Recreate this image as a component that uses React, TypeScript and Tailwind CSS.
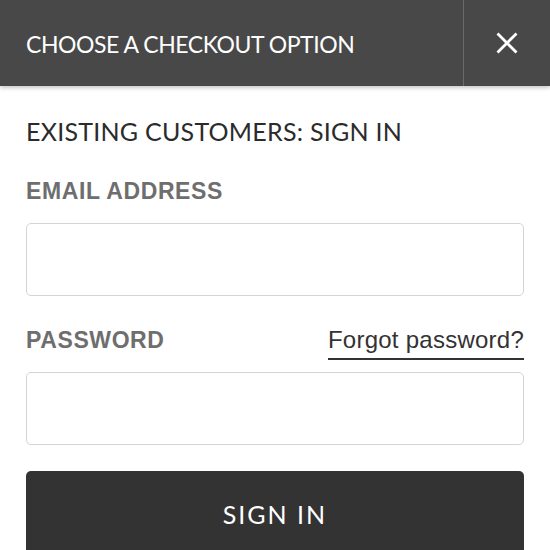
import React from "react";

export default function App() {
  const futura = { fontFamily: '"Lato", "Noto Sans", sans-serif' };
  const helv = { fontFamily: '"Liberation Sans", Arial, sans-serif' };
  return (
    <div className="w-[550px] h-[550px] overflow-hidden bg-white relative">
      <div className="h-[86px] bg-[#484848] flex items-stretch relative shadow-[0_2px_4px_rgba(0,0,0,0.22)] z-10">
        <div className="flex-1 flex items-center pl-[26px] pt-[2px]">
          <span className="text-white text-[23px] tracking-[-0.45px]" style={futura}>
            CHOOSE A CHECKOUT OPTION
          </span>
        </div>
        <div className="w-[1px] bg-[#6b6b6b]" />
        <div className="w-[86px] flex items-center justify-center">
          <svg width="22" height="22" viewBox="0 0 22 22">
            <path d="M1.5 1.5 L20.5 20.5 M20.5 1.5 L1.5 20.5" stroke="white" strokeWidth="2.8" />
          </svg>
        </div>
      </div>
      <div className="px-[26px] pt-[29px]">
        <h1 className="text-[#2b2b2b] text-[25px] leading-[32px] tracking-[0.25px]" style={futura}>
          EXISTING CUSTOMERS: SIGN IN
        </h1>
        <label
          className="block mt-[31px] text-[#6e6e6e] text-[23px] font-bold leading-[26px] tracking-[0.6px]"
          style={helv}
        >
          EMAIL ADDRESS
        </label>
        <div className="mt-[19px] h-[73px] border-[1.5px] border-[#d4d4d4] rounded-[5px]" />
        <div className="mt-[31px] flex items-start justify-between">
          <span
            className="text-[#6e6e6e] text-[23px] font-bold leading-[26px] tracking-[0.6px]"
            style={helv}
          >
            PASSWORD
          </span>
          <span
            className="block text-[#333333] text-[24px] leading-[26px] tracking-[0.25px] border-b-2 border-[#333333] pb-[5px]"
            style={helv}
          >
            Forgot password?
          </span>
        </div>
        <div className="mt-[12px] h-[73px] border-[1.5px] border-[#d4d4d4] rounded-[5px]" />
        <div className="mt-[26px] h-[90px] bg-[#333333] rounded-[5px] flex items-start justify-center pt-[25px]">
          <span className="text-white text-[25px] tracking-[2px]" style={futura}>
            SIGN IN
          </span>
        </div>
      </div>
    </div>
  );
}
